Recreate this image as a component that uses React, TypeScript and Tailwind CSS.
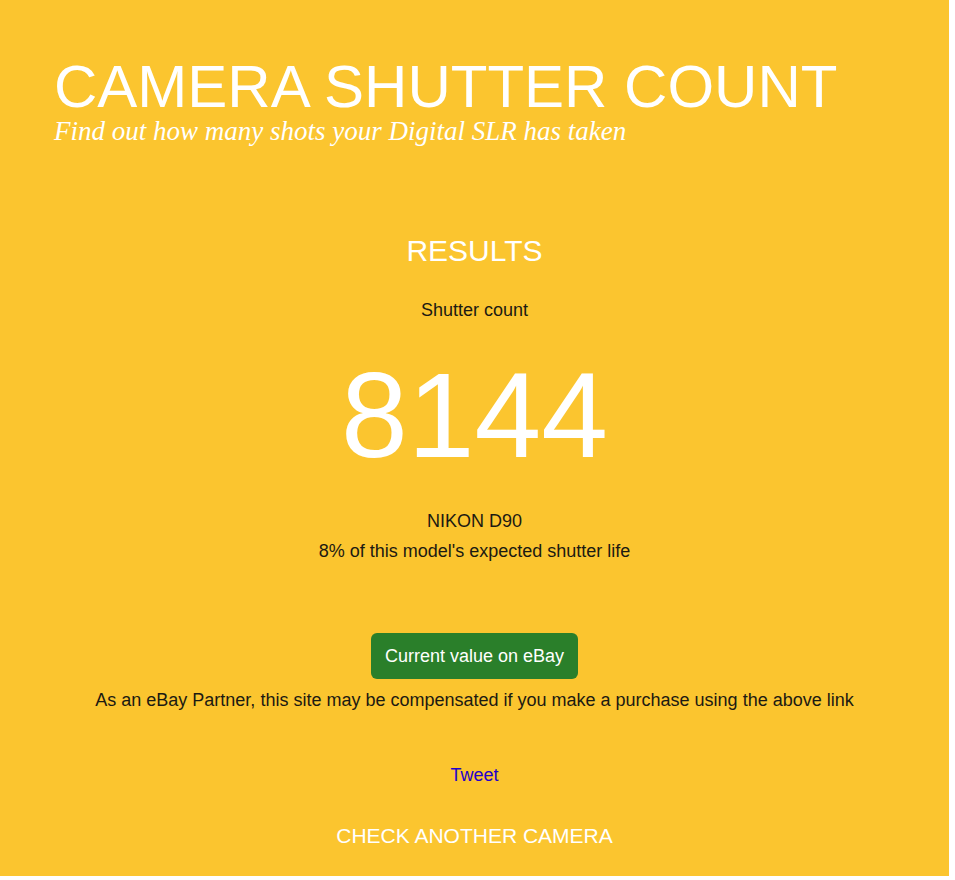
import React from "react";

export default function App() {
  return (
    <div className="w-[955px] h-[880px] bg-white">
      <div className="w-[949px] h-[876px] bg-[#fbc52f] text-[#1c1a12] [font-family:'Liberation_Sans',Arial,sans-serif] overflow-hidden">
        <header className="pl-[54px] pt-[57px]">
          <h1 className="text-[60px] leading-[60px] text-white">CAMERA SHUTTER COUNT</h1>
          <p className="text-[27px] leading-[28px] italic text-white [font-family:'Liberation_Serif',Georgia,serif]">
            Find out how many shots your Digital SLR has taken
          </p>
        </header>
        <main className="flex flex-col items-center text-center">
          <h2 className="mt-[89px] text-[30px] leading-[34px] text-white">RESULTS</h2>
          <p className="mt-[31px] text-[18px] leading-[22px]">Shutter count</p>
          <p className="mt-[25px] text-[120px] leading-[138px] text-white">8144</p>
          <p className="mt-[26px] text-[18px] leading-[22px]">NIKON D90</p>
          <p className="mt-[8px] text-[18px] leading-[22px]">8% of this model's expected shutter life</p>
          <a className="mt-[71px] w-[207px] h-[46px] rounded-[6px] bg-[#2a7f2a] text-white text-[18px] flex items-center justify-center">
            Current value on eBay
          </a>
          <p className="mt-[10px] text-[18px] leading-[22px]">
            As an eBay Partner, this site may be compensated if you make a purchase using the above link
          </p>
          <a className="mt-[53px] text-[18px] leading-[22px] text-[#2200cc]">Tweet</a>
          <a className="mt-[38px] text-[21px] leading-[24px] text-white">CHECK ANOTHER CAMERA</a>
        </main>
      </div>
    </div>
  );
}
